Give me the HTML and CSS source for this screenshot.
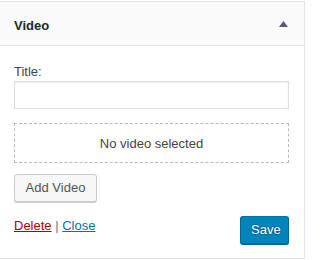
FILE: index.html
```html
<!DOCTYPE html>
<html>
<head>
<meta charset="utf-8">
<link rel="stylesheet" href="styles.css">
</head>
<body>
<div class="widget">
  <div class="widget-top">
    <h3 class="widget-title">Video</h3>
    <svg class="toggle" width="9" height="6" viewBox="0 0 9 6"><path d="M4.5 0 L9 6 L0 6 Z" fill="#555d66"/></svg>
  </div>
  <div class="widget-inside">
    <div class="field">
      <label class="label">Title:</label>
      <input class="text-input" type="text">
    </div>
    <div class="placeholder">No video selected</div>
    <div class="add-row"><button class="button">Add Video</button></div>
    <div class="controls">
      <div class="links"><a class="delete" href="#">Delete</a> <span class="sep">|</span> <a class="close" href="#">Close</a></div>
      <button class="button-primary">Save</button>
    </div>
  </div>
</div>
</body>
</html>
```
FILE: styles.css
```css
html, body {
  margin: 0;
  padding: 0;
  background: #fff;
}
body {
  font-family: "Liberation Sans", Arial, sans-serif;
  font-size: 13px;
  color: #23282d;
  overflow: hidden;
}
.widget {
  margin: 1px 0 0 -2px;
  width: 307px;
  box-sizing: border-box;
  border: 1px solid #e5e5e5;
  background: #fff;
}
.widget-top {
  display: flex;
  align-items: center;
  justify-content: space-between;
  background: #fafafa;
  border-bottom: 1px solid #e5e5e5;
  height: 43px;
  padding: 0 15px;
}
.widget-title {
  margin: 0;
  font-size: 13px;
  font-weight: 700;
  line-height: 1;
  color: #23282d;
  padding-top: 4px;
}
.toggle {
  display: block;
  margin-right: 1px;
  margin-top: 0;
}
.widget-inside {
  padding: 1px 15px 14px;
}
.field {
  margin: 17px 0 0;
}
.label {
  display: block;
  color: #444;
  line-height: 16px;
}
.text-input {
  display: block;
  box-sizing: border-box;
  width: 100%;
  height: 28px;
  margin: 1px 0 0;
  border: 1px solid #ddd;
  box-shadow: inset 0 1px 2px rgba(0,0,0,0.07);
  background: #fff;
  font: inherit;
  padding: 3px 5px;
}
.placeholder {
  margin-top: 14px;
  height: 40px;
  box-sizing: border-box;
  border: 1px dashed #b4b9be;
  display: flex;
  align-items: center;
  justify-content: center;
  color: #444;
}
.add-row {
  display: flex;
  margin: 11px 0 0;
}
.button {
  font: inherit;
  height: 28px;
  box-sizing: border-box;
  padding: 0 10px 1px;
  border: 1px solid #ccc;
  border-radius: 3px;
  background: #f7f7f7;
  box-shadow: 0 1px 0 #ccc;
  color: #555;
  line-height: 26px;
  width: 83px;
}
.controls {
  display: flex;
  justify-content: space-between;
  align-items: flex-start;
  margin-top: 14px;
}
.links {
  line-height: 18px;
  color: #72777c;
  margin-top: 1px;
}
.delete {
  color: #a00;
  text-decoration: underline;
}
.close {
  color: #0073aa;
  text-decoration: underline;
}
.sep {
  color: #72777c;
}
.button-primary {
  font: inherit;
  height: 28px;
  box-sizing: border-box;
  padding: 0 10px 1px;
  width: 49px;
  border: 1px solid #0073aa;
  border-color: #0073aa #006799 #006799;
  border-radius: 3px;
  background: #0085ba;
  box-shadow: 0 1px 0 #006799;
  color: #fff;
  line-height: 26px;
  text-shadow: 0 -1px 1px #006799, 1px 0 1px #006799, 0 1px 1px #006799, -1px 0 1px #006799;
}
```
